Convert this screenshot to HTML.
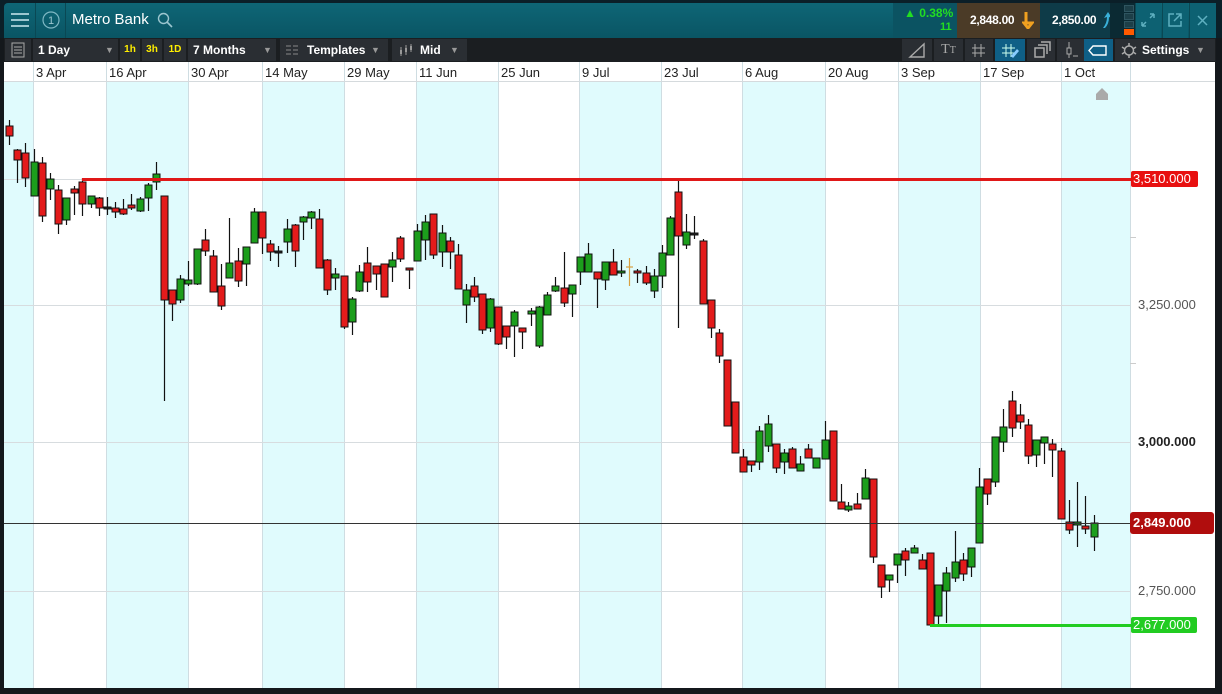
<!DOCTYPE html>
<html><head><meta charset="utf-8">
<style>
*{margin:0;padding:0;box-sizing:border-box}
body{width:1222px;height:694px;overflow:hidden;background:#14181c;font-family:"Liberation Sans",sans-serif;position:relative}
.hdr{position:absolute;left:0;top:0;width:1222px;height:38px;background:#0b1f28}
.bar{position:absolute;left:4px;top:3px;width:1212px;height:35px;background:linear-gradient(#0e6676,#0a5564);border-radius:4px 4px 0 0}
.tb{position:absolute;left:4px;top:38px;width:1212px;height:24px;background:#1b1e21}
.it{position:absolute;top:1px;height:22px;background:#2a2e33;color:#fff;font-size:12px;font-weight:bold;line-height:22px}
.abs{position:absolute}
.t{position:absolute;font-size:13px;color:#222;top:65px}
</style></head><body>
<div class="hdr"></div>
<div class="bar"></div>
<div class="abs" style="left:4px;top:3px;width:32px;height:35px;border-right:1px solid #0a4854"></div>
<svg class="abs" style="left:11px;top:12px" width="19" height="16"><rect y="1" width="18" height="2" fill="#9cc6cf"/><rect y="7" width="18" height="2" fill="#9cc6cf"/><rect y="13" width="18" height="2" fill="#9cc6cf"/></svg>
<div class="abs" style="left:36px;top:3px;width:30px;height:35px;border-right:1px solid #0a4854"></div>
<svg class="abs" style="left:42px;top:11px" width="18" height="18"><circle cx="9" cy="9" r="8" fill="none" stroke="#7fb8c4" stroke-width="1.2"/><text x="9" y="13" font-size="11" fill="#9cc6cf" text-anchor="middle" font-family="Liberation Sans">1</text></svg>
<div class="abs" style="left:72px;top:11px;color:#fff;font-size:15px">Metro Bank</div>
<svg class="abs" style="left:157px;top:12px" width="16" height="16"><circle cx="6.5" cy="6.5" r="5" fill="none" stroke="#9cc6cf" stroke-width="1.4"/><line x1="10" y1="10" x2="15" y2="15" stroke="#9cc6cf" stroke-width="1.6"/></svg>
<div class="abs" style="left:893px;top:3px;width:64px;height:35px;background:#0b5362"></div>
<div class="abs" style="left:904px;top:6px;color:#22dd22;font-size:12px;font-weight:bold">▲ 0.38%</div>
<div class="abs" style="left:940px;top:21px;color:#22dd22;font-size:11px;font-weight:bold">11</div>
<div class="abs" style="left:957px;top:3px;width:83px;height:35px;background:#4b3b27"></div>
<div class="abs" style="left:970px;top:13px;color:#fff;font-size:12px;font-weight:bold;letter-spacing:-0.3px">2,848.00</div>
<svg class="abs" style="left:1022px;top:11px" width="12" height="18"><path d="M4 1 L4 10 Q4 12 6 12 L2 12 L6 17 L10 12 L6 12" fill="none" stroke="#f0a020" stroke-width="3"/></svg>
<div class="abs" style="left:1040px;top:3px;width:70px;height:35px;background:#0e3b48"></div>
<div class="abs" style="left:1052px;top:13px;color:#fff;font-size:12px;font-weight:bold;letter-spacing:-0.3px">2,850.00</div>
<svg class="abs" style="left:1101px;top:11px" width="12" height="18"><path d="M2 17 Q6 12 6 6 L3 7 L7 1 L11 7 L8 6 Q8 13 4 17Z" fill="#3ab0d8"/></svg>
<div class="abs" style="left:1110px;top:3px;width:25px;height:35px;background:#0b2a33"></div>
<div class="abs" style="left:1124px;top:5px;width:10px;height:7px;background:#1d3f48;border:1px solid #2f5560"></div>
<div class="abs" style="left:1124px;top:13px;width:10px;height:7px;background:#1d3f48;border:1px solid #2f5560"></div>
<div class="abs" style="left:1124px;top:21px;width:10px;height:7px;background:#1d3f48;border:1px solid #2f5560"></div>
<div class="abs" style="left:1124px;top:29px;width:10px;height:6px;background:#ff5a00"></div>
<div class="abs" style="left:1135px;top:3px;width:26px;height:35px;background:#0d6172;border-left:1px solid #0a4854"></div>
<svg class="abs" style="left:1141px;top:13px" width="14" height="14"><path d="M1 13 L5 9 M1 13 L1 9 M1 13 L5 13 M13 1 L9 5 M13 1 L9 1 M13 1 L13 5" stroke="#5fb0c0" stroke-width="1.5" fill="none"/></svg>
<div class="abs" style="left:1162px;top:3px;width:26px;height:35px;background:#0d6172;border-left:1px solid #0a4854"></div>
<svg class="abs" style="left:1168px;top:13px" width="14" height="14"><path d="M6 1 L1 1 L1 13 L13 13 L13 8 M8 1 L13 1 L13 6 M13 1 L6 8" stroke="#5fb0c0" stroke-width="1.5" fill="none"/></svg>
<div class="abs" style="left:1189px;top:3px;width:27px;height:35px;background:#0d6172;border-left:1px solid #0a4854"></div>
<svg class="abs" style="left:1197px;top:15px" width="11" height="11"><path d="M1 1 L10 10 M10 1 L1 10" stroke="#5fb0c0" stroke-width="1.5"/></svg>

<div class="tb"></div>
<div class="it" style="left:5px;width:26px;top:39px"><svg width="26" height="22"><rect x="7" y="4" width="12" height="14" fill="none" stroke="#aaa"/><path d="M9 8h8M9 11h8M9 14h8" stroke="#aaa"/></svg></div>
<div class="it" style="left:33px;width:85px;top:39px;padding-left:5px">1 Day<span style="position:absolute;left:72px;color:#999;font-size:9px">▼</span></div>
<div class="it" style="left:120px;width:20px;top:39px;color:#ffee00;font-size:10px;text-align:center">1h</div>
<div class="it" style="left:142px;width:20px;top:39px;color:#ffee00;font-size:10px;text-align:center">3h</div>
<div class="it" style="left:164px;width:22px;top:39px;color:#ffee00;font-size:10px;text-align:center">1D</div>
<div class="it" style="left:188px;width:88px;top:39px;padding-left:5px">7 Months<span style="position:absolute;left:75px;color:#999;font-size:9px">▼</span></div>
<div class="it" style="left:280px;width:108px;top:39px;padding-left:27px">Templates<span style="position:absolute;left:91px;color:#999;font-size:9px">▼</span><svg class="abs" style="left:6px;top:5px" width="14" height="12"><path d="M0 2h14M0 6h14M0 10h14" stroke="#888" stroke-dasharray="5 2"/></svg></div>
<div class="it" style="left:392px;width:75px;top:39px;padding-left:28px">Mid<span style="position:absolute;left:58px;color:#999;font-size:9px">▼</span><svg class="abs" style="left:6px;top:4px" width="16" height="14"><path d="M3 4v9M8 2v10M13 1v8" stroke="#999"/><rect x="2" y="7" width="2" height="4" fill="#999"/><rect x="7" y="5" width="2" height="4" fill="#999"/><rect x="12" y="3" width="2" height="4" fill="#999"/></svg></div>
<div class="it" style="left:902px;width:30px;top:39px"><svg width="30" height="22"><path d="M8 18h14V5z" fill="none" stroke="#aaa" stroke-width="1.4"/></svg></div>
<div class="it" style="left:934px;width:29px;top:39px;color:#aaa;font-family:'Liberation Serif',serif;font-weight:normal;font-size:14px;text-align:center">T<span style="font-size:10px">T</span></div>
<div class="it" style="left:965px;width:28px;top:39px"><svg width="28" height="22"><path d="M10 5v13M16 5v13M7 9h13M7 14h13" stroke="#aaa"/></svg></div>
<div class="it" style="left:995px;width:30px;top:39px;background:#0f5f86"><svg width="30" height="22"><path d="M11 5v13M16 5v13M7 9h13M7 14h13" stroke="#cfe" /><path d="M16 17l6-7 2 2-6 7z" fill="#8cf"/></svg></div>
<div class="it" style="left:1027px;width:28px;top:39px"><svg width="28" height="22"><rect x="8" y="9" width="9" height="9" fill="none" stroke="#aaa" stroke-width="1.5"/><path d="M11 6h9v9M14 3h9v9" fill="none" stroke="#aaa" stroke-width="1.5"/></svg></div>
<div class="it" style="left:1057px;width:27px;top:39px"><svg width="27" height="22"><path d="M12 3v16" stroke="#aaa"/><rect x="10" y="9" width="4" height="6" fill="#2a2e33" stroke="#aaa"/><path d="M16 17h5" stroke="#aaa"/></svg></div>
<div class="it" style="left:1084px;width:29px;top:39px;background:#0f5f86"><svg width="29" height="22"><path d="M9 7h13v9H9l-4-4.5z" fill="none" stroke="#fff" stroke-width="1.4"/></svg></div>
<div class="it" style="left:1115px;width:100px;top:39px;padding-left:27px">Settings<span style="position:absolute;left:81px;color:#999;font-size:9px">▼</span><svg class="abs" style="left:6px;top:4px" width="16" height="15"><circle cx="8" cy="7.5" r="4.5" fill="none" stroke="#aaa" stroke-width="1.5"/><path d="M8 0v3M8 12v3M1 4l3 2M12 9l3 2M1 11l3-2M12 6l3-2" stroke="#aaa" stroke-width="1.5"/></svg></div>

<svg class="abs" style="left:0;top:62px" width="1222" height="632" id="ch">
<rect x="0" y="0" width="1222" height="632" fill="#14181c"/>
<rect x="4" y="0" width="1211" height="626" fill="#fff"/>
<g id="bg"></g>
<g id="grid"></g>
<g id="c"></g>
</svg>
<div class="abs" style="left:4px;top:81px;width:1211px;height:1px;background:#d5dadd"></div>

<div class="t" style="left:36px">3 Apr</div>
<div class="t" style="left:109px">16 Apr</div>
<div class="t" style="left:191px">30 Apr</div>
<div class="t" style="left:265px">14 May</div>
<div class="t" style="left:347px">29 May</div>
<div class="t" style="left:419px">11 Jun</div>
<div class="t" style="left:501px">25 Jun</div>
<div class="t" style="left:582px">9 Jul</div>
<div class="t" style="left:664px">23 Jul</div>
<div class="t" style="left:745px">6 Aug</div>
<div class="t" style="left:828px">20 Aug</div>
<div class="t" style="left:901px">3 Sep</div>
<div class="t" style="left:983px">17 Sep</div>
<div class="t" style="left:1064px">1 Oct</div>

<div class="abs" style="left:1138px;top:297px;font-size:13px;color:#555">3,250.000</div>
<div class="abs" style="left:1138px;top:434px;font-size:13px;color:#222;font-weight:bold">3,000.000</div>
<div class="abs" style="left:1138px;top:583px;font-size:13px;color:#555">2,750.000</div>
<div class="abs" style="left:1131px;top:171px;width:67px;height:16px;background:#e81010;border-radius:2px;color:#fff;font-size:13px;line-height:16px;padding-left:2px">3,510.000</div>
<div class="abs" style="left:1130px;top:512px;width:84px;height:22px;background:#b00d0d;border-radius:3px;color:#fff;font-size:13px;font-weight:bold;line-height:22px;padding-left:3px">2,849.000</div>
<div class="abs" style="left:1131px;top:617px;width:66px;height:16px;background:#22cc22;border-radius:2px;color:#fff;font-size:13px;line-height:16px;padding-left:2px">2,677.000</div>

<script>
var NS="http://www.w3.org/2000/svg",O=62;
function el(p,t,a){var e=document.createElementNS(NS,t);for(var k in a)e.setAttribute(k,a[k]);p.appendChild(e);return e}
var bg=document.getElementById('bg'),gr=document.getElementById('grid'),c=document.getElementById('c');
var bands=[[4,33],[106,188],[262,344],[416,498],[579,661],[742,825],[898,980],[1061,1130]];
bands.forEach(function(b){el(bg,'rect',{x:b[0],y:20,width:b[1]-b[0],height:606,fill:'#e0fbfd'})});
[33,106,188,262,344,416,498,579,661,742,825,898,980,1061,1130].forEach(function(x){el(gr,'line',{x1:x+.5,y1:0,x2:x+.5,y2:626,stroke:'#cfdde2'})});
[179,305,442,591].forEach(function(y){el(gr,'line',{x1:4,y1:y-O+.5,x2:1130,y2:y-O+.5,stroke:'#d7dcdf'})});
[237,363].forEach(function(y){el(gr,'line',{x1:1130,y1:y-O+.5,x2:1136,y2:y-O+.5,stroke:'#ccc'})});
el(gr,'path',{d:'M1096 '+(94-O)+' L1102 '+(88-O)+' L1108 '+(94-O)+'Z',fill:'#aaa'});
el(gr,'rect',{x:1096,y:94-O,width:12,height:6,fill:'#aaa'});
var d=[
[9,120,145,126,136,'r'],[17,149,183,150,160,'r'],[25,143,187,153,178,'r'],[34,149,196,162,196,'g'],[42,157,222,163,216,'r'],[50,173,200,179,189,'g'],[58,185,234,190,224,'r'],[66,198,225,198,220,'g'],[74,186,215,189,193,'r'],[82,178,216,182,204,'r'],[91,196,208,196,204,'g'],[99,197,216,198,208,'r'],[107,197,215,207,209,'k'],[115,202,218,208,212,'r'],[123,199,215,209,214,'r'],[131,194,210,205,208,'r'],[140,197,212,199,211,'g'],[148,183,211,185,198,'g'],[156,162,190,174,182,'g'],
[164,196,401,196,300,'r'],[172,290,321,290,304,'r'],[180,275,303,279,300,'g'],[188,261,286,280,284,'g'],[197,249,285,249,284,'g'],[205,229,256,240,251,'r'],[213,250,292,256,292,'r'],[221,264,310,286,306,'r'],[229,218,278,263,278,'g'],[238,248,287,261,281,'r'],[246,248,286,247,264,'g'],[254,208,243,212,243,'g'],[262,212,254,212,238,'r'],[270,240,261,244,252,'r'],[278,246,267,251,252,'k'],[287,219,253,229,242,'g'],[295,224,267,225,251,'r'],[303,216,240,217,222,'g'],[311,211,229,212,218,'g'],[319,209,268,219,268,'r'],[327,259,295,260,290,'r'],[335,268,290,274,278,'g'],
[344,276,329,276,327,'r'],[352,297,335,299,322,'g'],[359,265,292,272,291,'g'],[367,247,292,263,282,'r'],[376,266,290,266,274,'r'],[384,264,297,264,297,'r'],[392,252,282,260,267,'g'],[400,236,262,238,259,'r'],[409,268,289,268,270,'r'],[417,224,261,231,261,'g'],[425,215,260,222,240,'g'],[433,214,259,214,255,'r'],[442,225,267,233,252,'g'],[450,237,269,241,252,'r'],[458,244,289,255,289,'r'],[466,284,323,290,305,'g'],[474,277,302,286,297,'r'],[482,294,334,294,330,'r'],[490,298,332,299,328,'g'],[498,307,345,307,344,'r'],[506,326,349,326,337,'r'],[514,310,357,312,326,'g'],[522,328,349,328,332,'r'],[531,308,326,311,314,'g'],[539,306,348,307,346,'g'],[547,292,315,295,315,'g'],[555,277,292,286,291,'g'],[564,252,307,288,303,'r'],[572,285,317,285,294,'g'],[580,257,285,257,272,'g'],
[588,243,272,254,272,'g'],[597,272,308,272,279,'r'],[605,262,290,262,280,'g'],[613,249,275,262,275,'r'],[621,260,277,271,273,'g'],[629,258,286,267,267,'o'],[637,269,283,271,273,'r'],[646,266,285,273,283,'r'],[654,269,298,276,291,'g'],[662,245,288,253,276,'g'],[670,216,255,218,255,'g'],[678,181,328,192,236,'r'],[686,214,249,232,245,'g'],[694,216,239,233,234,'k'],[703,239,304,241,304,'r'],[711,300,338,300,328,'r'],[719,329,363,333,356,'r'],[727,360,426,360,426,'r'],[735,402,453,402,453,'r'],[743,449,472,457,472,'r'],
[751,461,472,461,465,'r'],[759,426,470,431,462,'g'],[768,415,452,424,446,'g'],[776,444,473,444,468,'r'],[784,449,474,453,462,'g'],[792,447,468,449,468,'r'],[800,456,471,464,471,'g'],[808,444,458,449,458,'r'],[816,458,468,458,468,'g'],[825,421,459,440,459,'g'],[833,431,501,431,501,'r'],[841,484,509,502,509,'r'],[848,502,512,506,510,'g'],[857,493,509,504,509,'r'],[865,469,499,478,499,'g'],[873,479,563,479,557,'r'],[881,565,598,565,587,'r'],[889,575,592,575,580,'g'],[897,554,583,554,565,'g'],[905,548,576,551,560,'r'],[914,545,553,548,553,'g'],[922,554,569,560,569,'r'],[930,553,625,553,625,'r'],[938,585,627,585,616,'g'],[946,567,623,573,591,'g'],[955,531,582,562,578,'g'],[963,553,581,560,574,'r'],[971,548,577,548,567,'g'],[979,468,543,487,543,'g'],[987,479,505,479,494,'r'],[995,437,487,437,482,'g'],[1003,409,452,427,442,'g'],[1012,391,437,401,428,'r'],[1020,404,429,415,422,'r'],[1028,419,464,425,456,'r'],[1036,440,467,440,455,'g'],[1044,437,464,437,443,'g'],[1052,439,477,444,450,'r'],[1061,448,519,451,519,'r'],[1069,500,534,522,530,'r'],[1077,482,547,522,525,'g'],[1085,496,534,526,529,'r'],[1094,515,551,523,537,'g']];
var col={r:'#e31b1b',g:'#1c9e1c',k:'#222',o:'#e0a030'};
d.forEach(function(a){var x=a[0];var s=a[5]=='o'?'#d8a040':'#111';
el(c,'line',{x1:x+.5,y1:a[1]-O,x2:x+.5,y2:a[2]-O,stroke:s,'stroke-width':1.2});
if(a[5]=='o'){el(c,'line',{x1:x-3,y1:a[3]-O,x2:x+4,y2:a[3]-O,stroke:s,'stroke-width':1.2});return}
var h=Math.max(a[4]-a[3],2);el(c,'rect',{x:x-3,y:a[3]-O,width:7,height:h,fill:col[a[5]],stroke:'#111','stroke-width':1});});
el(c,'line',{x1:4,y1:523-O+.5,x2:1130,y2:523-O+.5,stroke:'#333','stroke-width':1});
el(c,'rect',{x:82,y:178-O,width:1049,height:3,fill:'#e01818'});
el(c,'rect',{x:930,y:624-O,width:201,height:3,fill:'#22cc22'});
</script>
</body></html>
